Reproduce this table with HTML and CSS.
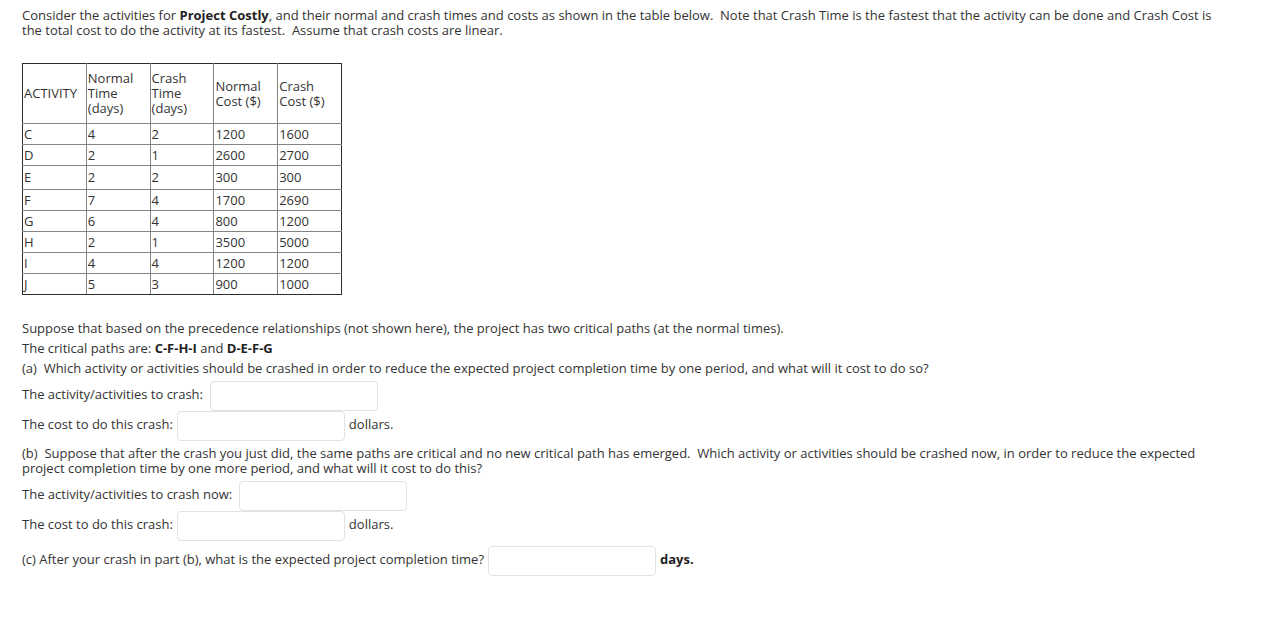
FILE: index.html
```html
<!DOCTYPE html>
<html>
<head>
<meta charset="utf-8">
<link rel="stylesheet" href="styles.css">
</head>
<body>
<div class="page">
  <p class="intro">Consider the activities for <b>Project Costly</b>, and their normal and crash times and costs as shown in the table below.&nbsp; Note that Crash Time is the fastest that the activity can be done and Crash Cost is the total cost to do the activity at its fastest.&nbsp; Assume that crash costs are linear.</p>

  <table class="data">
    <tr class="head">
      <td>ACTIVITY</td>
      <td>Normal<br>Time<br>(days)</td>
      <td>Crash<br>Time<br>(days)</td>
      <td>Normal<br>Cost ($)</td>
      <td>Crash<br>Cost ($)</td>
    </tr>
    <tr><td>C</td><td>4</td><td>2</td><td>1200</td><td>1600</td></tr>
    <tr><td>D</td><td>2</td><td>1</td><td>2600</td><td>2700</td></tr>
    <tr class="tall"><td>E</td><td>2</td><td>2</td><td>300</td><td>300</td></tr>
    <tr><td>F</td><td>7</td><td>4</td><td>1700</td><td>2690</td></tr>
    <tr><td>G</td><td>6</td><td>4</td><td>800</td><td>1200</td></tr>
    <tr><td>H</td><td>2</td><td>1</td><td>3500</td><td>5000</td></tr>
    <tr><td>I</td><td>4</td><td>4</td><td>1200</td><td>1200</td></tr>
    <tr><td>J</td><td>5</td><td>3</td><td>900</td><td>1000</td></tr>
  </table>

  <div class="questions">
    <p>Suppose that based on the precedence relationships (not shown here), the project has two critical paths (at the normal times).</p>
    <p>The critical paths are: <b>C-F-H-I</b> and <b>D-E-F-G</b></p>
    <p>(a)&nbsp; Which activity or activities should be crashed in order to reduce the expected project completion time by one period, and what will it cost to do so?</p>
    <div class="rows">
      <div class="row"><span class="lbl wide">The activity/activities to crash:</span><span class="field"></span></div>
      <div class="row"><span class="lbl">The cost to do this crash:</span><span class="field"></span><span class="lbl">dollars.</span></div>
    </div>
    <p>(b)&nbsp; Suppose that after the crash you just did, the same paths are critical and no new critical path has emerged.&nbsp; Which activity or activities should be crashed now, in order to reduce the expected project completion time by one more period, and what will it cost to do this?</p>
    <div class="rows">
      <div class="row"><span class="lbl wide">The activity/activities to crash now:</span><span class="field"></span></div>
      <div class="row"><span class="lbl">The cost to do this crash:</span><span class="field"></span><span class="lbl">dollars.</span></div>
    </div>
    <div class="row"><span class="lbl">(c) After your crash in part (b), what is the expected project completion time?</span><span class="field"></span><b class="lbl">days.</b></div>
  </div>
</div>
</body>
</html>
```

FILE: styles.css
```css
html, body {
  margin: 0;
  padding: 0;
  background: #fff;
}

body {
  font-family: "Open Sans", "Liberation Sans", sans-serif;
  font-size: 13px;
  line-height: 15px;
  color: #333;
}

.page {
  padding: 8px 50px 0 22px;
}

p {
  margin: 0;
}

b {
  font-weight: 700;
  color: #222;
}

.intro {
  margin-bottom: 25px;
}

.data {
  border-collapse: collapse;
  width: 320px;
  table-layout: fixed;
  margin-bottom: 26px;
}

.data td {
  border: 1px solid #848484;
  padding: 2px 1px;
  height: 16px;
  vertical-align: middle;
  text-align: left;
  color: #333;
  width: 20%;
  white-space: nowrap;
}

.data .head td {
  height: 55px;
}

.data .tall td {
  height: 19px;
}

.data tr:first-child td {
  border-top-color: #2e2e2e;
}

.data tr:last-child td {
  border-bottom-color: #2e2e2e;
}

.data td:first-child {
  border-left-color: #2e2e2e;
}

.data td:last-child {
  border-right-color: #2e2e2e;
}

.questions {
  display: flex;
  flex-direction: column;
  gap: 5px;
}

.rows {
  display: flex;
  flex-direction: column;
}

.row {
  display: flex;
  align-items: center;
  height: 30px;
  gap: 4px;
}

.lbl {
  margin-bottom: 4px;
}

.lbl.wide {
  margin-right: 3px;
}

.field {
  display: block;
  box-sizing: border-box;
  width: 168px;
  height: 30px;
  border: 1px solid #e2e2e2;
  border-radius: 4px;
  background: #fff;
}
```
